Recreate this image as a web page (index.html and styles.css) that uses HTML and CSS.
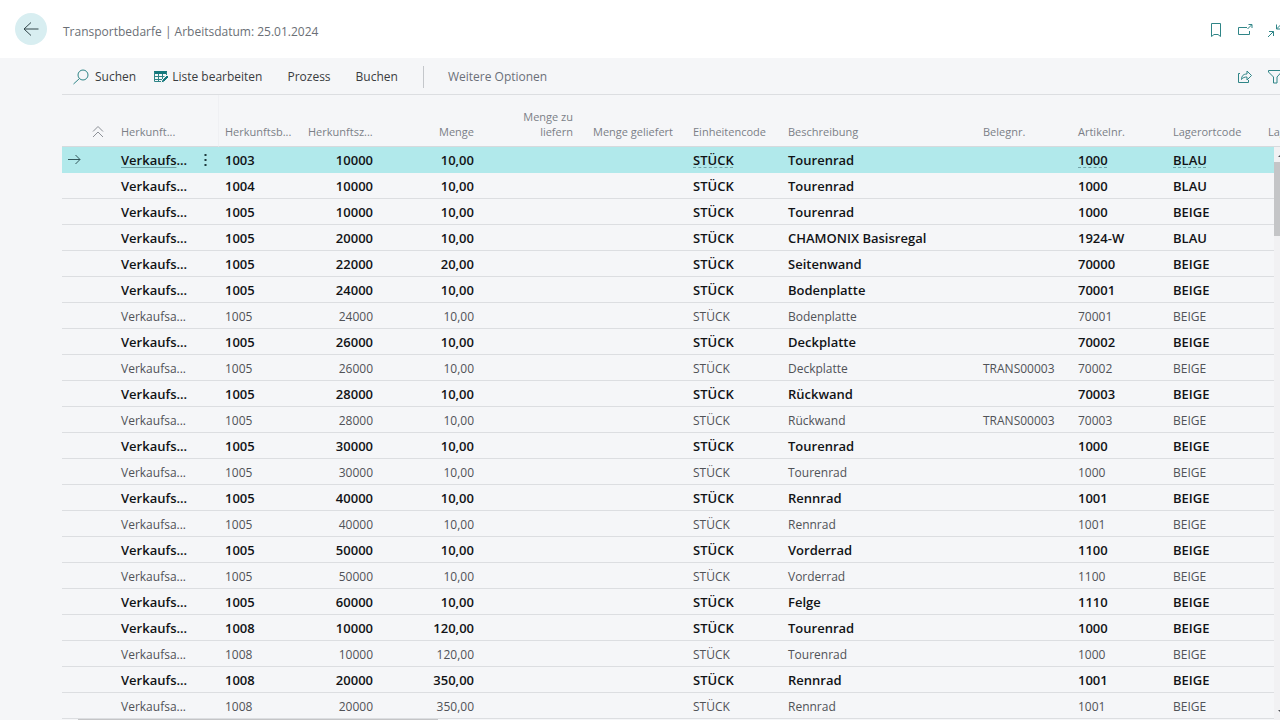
FILE: index.html
```html
<!DOCTYPE html>
<html lang="de">
<head>
<meta charset="utf-8">
<title>Transportbedarfe</title>
<link rel="stylesheet" href="styles.css">
</head>
<body>
<header class="topbar">
  <button class="back" type="button" aria-label="Zurück">
    <svg width="16" height="16" viewBox="0 0 16 16"><path d="M15.500 8H1M8 1.500L1 8l7 6.500"/></svg>
  </button>
  <h1 class="title">Transportbedarfe | Arbeitsdatum: 25.01.2024</h1>
  <div class="icons">
    <button type="button" aria-label="Lesezeichen"><svg width="16" height="16" viewBox="0 0 16 16"><path d="M4.500 1.500h9v13L11 12.500H7l-2.500 2z"/></svg></button>
    <button type="button" aria-label="In neuem Fenster öffnen"><svg width="16" height="16" viewBox="0 0 16 16"><path d="M10 5.500H1.500v7h11V9M10.500 7l4-4M11.500 2.500H15V6"/></svg></button>
    <button type="button" aria-label="Verkleinern"><svg width="16" height="16" viewBox="0 0 16 16"><path d="M1 15l5.500-5.500M2 9.500h4.500V14M15 1.500L9.500 7M9.500 2.500V7H14"/></svg></button>
  </div>
</header>
<main class="page">
  <nav class="toolbar">
    <button class="action search" type="button"><svg width="16" height="16" viewBox="0 0 16 16"><circle cx="10" cy="6" r="5"/><path d="M6.500 9.500L.5 15"/></svg>Suchen</button>
    <button class="action edit" type="button"><svg width="15" height="14" viewBox="0 0 15 14"><path class="solid" d="M0 1h13v3H0z"/><path d="M.5 2v9.500H7M12.500 2v3M4.500 4v8M8.500 4v5M.5 6.500h10M.5 9.500H8"/><path class="pen" d="M7 13l1-3 5-5 2 2-5 5z"/></svg>Liste bearbeiten</button>
    <button class="action" type="button">Prozess</button>
    <button class="action" type="button">Buchen</button>
    <button class="action more" type="button">Weitere Optionen</button>
    <div class="icons">
      <button type="button" aria-label="Teilen"><svg width="16" height="16" viewBox="0 0 16 16"><path d="M3 4.500H1.500v9h10V11M4.500 10.500c.3-4 2-5.500 5.500-5.500V2l4.500 4.500L10 11V8c-2.500 0-4 .5-5.500 2.500z"/></svg></button>
      <button type="button" aria-label="Filter"><svg width="16" height="16" viewBox="0 0 16 16"><path d="M1.500 1.500h13V3L10 8v6H6.500V8l-5-5z"/></svg></button>
    </div>
  </nav>
  <section class="list">
    <table class="grid">
      <colgroup><col class="w-mark"><col class="w-sort"><col class="w-source"><col class="w-doc"><col class="w-line"><col class="w-qty"><col class="w-todo"><col class="w-done"><col class="w-code"><col class="w-desc"><col class="w-code"><col class="w-code"><col class="w-code"><col></colgroup>
      <thead>
        <tr>
          <th></th>
          <th class="sort"><svg width="12" height="13" viewBox="0 0 12 13"><path d="M1 6.500L6 1.500l5 5M1 12l5-5 5 5"/></svg></th>
          <th class="split">Herkunft...</th><th>Herkunftsb...</th><th>Herkunftsz...</th>
          <th class="num">Menge</th><th class="num">Menge zu liefern</th><th class="num wide">Menge geliefert</th>
          <th>Einheitencode</th><th>Beschreibung</th><th>Belegnr.</th><th>Artikelnr.</th><th>Lagerortcode</th><th>Lag</th>
        </tr>
      </thead>
      <tbody id="rows"></tbody>
    </table>
    <div class="vscroll"><svg width="10" height="6" viewBox="0 0 10 6"><path d="M1 5l4-4 4 4z"/></svg><div class="thumb"></div><svg width="10" height="6" viewBox="0 0 10 6"><path d="M1 1l4 4 4-4z"/></svg></div>
    <div class="hscroll"></div>
  </section>
</main>
<script src="rows.js"></script>
</body>
</html>
```
FILE: rows.js
```js
// bold, document no., line no., quantity, description, transport no., item no., location
const rows = [
  [1, "1003", "10000", "10,00", "Tourenrad", "", "1000", "BLAU"],
  [1, "1004", "10000", "10,00", "Tourenrad", "", "1000", "BLAU"],
  [1, "1005", "10000", "10,00", "Tourenrad", "", "1000", "BEIGE"],
  [1, "1005", "20000", "10,00", "CHAMONIX Basisregal", "", "1924-W", "BLAU"],
  [1, "1005", "22000", "20,00", "Seitenwand", "", "70000", "BEIGE"],
  [1, "1005", "24000", "10,00", "Bodenplatte", "", "70001", "BEIGE"],
  [0, "1005", "24000", "10,00", "Bodenplatte", "", "70001", "BEIGE"],
  [1, "1005", "26000", "10,00", "Deckplatte", "", "70002", "BEIGE"],
  [0, "1005", "26000", "10,00", "Deckplatte", "TRANS00003", "70002", "BEIGE"],
  [1, "1005", "28000", "10,00", "Rückwand", "", "70003", "BEIGE"],
  [0, "1005", "28000", "10,00", "Rückwand", "TRANS00003", "70003", "BEIGE"],
  [1, "1005", "30000", "10,00", "Tourenrad", "", "1000", "BEIGE"],
  [0, "1005", "30000", "10,00", "Tourenrad", "", "1000", "BEIGE"],
  [1, "1005", "40000", "10,00", "Rennrad", "", "1001", "BEIGE"],
  [0, "1005", "40000", "10,00", "Rennrad", "", "1001", "BEIGE"],
  [1, "1005", "50000", "10,00", "Vorderrad", "", "1100", "BEIGE"],
  [0, "1005", "50000", "10,00", "Vorderrad", "", "1100", "BEIGE"],
  [1, "1005", "60000", "10,00", "Felge", "", "1110", "BEIGE"],
  [1, "1008", "10000", "120,00", "Tourenrad", "", "1000", "BEIGE"],
  [0, "1008", "10000", "120,00", "Tourenrad", "", "1000", "BEIGE"],
  [1, "1008", "20000", "350,00", "Rennrad", "", "1001", "BEIGE"],
  [0, "1008", "20000", "350,00", "Rennrad", "", "1001", "BEIGE"]
];

const arrow = '<svg class="arrow" width="13" height="11" viewBox="0 0 13 11"><path d="M0 5.500h12M7.500 1L12 5.500 7.500 10"/></svg>';
const menu = '<button class="menu" type="button" aria-label="Weitere Optionen anzeigen"><svg width="3" height="14" viewBox="0 0 3 14"><path d="M.5 1h2v2h-2zM.5 6h2v2h-2zM.5 11h2v2h-2z"/></svg></button>';

document.getElementById("rows").innerHTML = rows.map(([bold, doc, line, qty, desc, trans, item, loc], i) => {
  const current = i === 0;
  const link = (text) => current ? `<a class="link" href="#">${text}</a>` : text;
  const source = current
    ? `<div class="source"><span><a class="link first" href="#">Verkaufs</a>...</span>${menu}</div>`
    : bold ? "Verkaufs..." : "Verkaufsa...";
  return `<tr class="${bold ? "bold" : "plain"}${current ? " current" : ""}">
    <td class="mark">${current ? arrow : ""}</td><td></td><td>${source}</td><td>${doc}</td>
    <td class="num">${line}</td><td class="num">${qty}</td><td></td><td></td>
    <td>${link("STÜCK")}</td><td>${desc}</td><td>${trans}</td><td>${link(item)}</td><td>${link(loc)}</td><td></td></tr>`;
}).join("");
```
FILE: styles.css
```css
* { box-sizing: border-box; }
body {
  margin: 0;
  height: 100vh;
  overflow: hidden;
  display: flex;
  flex-direction: column;
  background: #f5f6f8;
  color: #505257;
  font-family: "Open Sans", "Noto Sans", sans-serif;
  font-size: 12px;
}
button {
  margin: 0;
  padding: 0;
  border: 0;
  background: none;
  color: inherit;
  font: inherit;
}
svg { display: block; flex: none; fill: none; stroke: #2f8587; stroke-width: 1; }

.topbar {
  flex: none;
  display: flex;
  align-items: center;
  height: 58px;
  padding-left: 15px;
  background: #fff;
}
.back {
  display: flex;
  align-items: center;
  justify-content: center;
  width: 32px;
  height: 32px;
  border-radius: 50%;
  background: #d8eef1;
}
.back svg { stroke: #33474b; }
.title {
  margin: 0;
  padding: 5px 0 0 16px;
  color: #6b6f76;
  font-size: 12px;
  font-weight: 400;
}
.icons {
  display: flex;
  gap: 14px;
  margin: 2px -3px 0 auto;
}

.page {
  flex: 1;
  min-height: 0;
  display: flex;
  flex-direction: column;
  padding-left: 62px;
}
.toolbar {
  flex: none;
  display: flex;
  align-items: center;
  height: 37px;
  padding: 2px 0 0 11px;
  border-bottom: 1px solid #dcdee1;
  color: #3a3c40;
  font-size: 12px;
}
.toolbar .icons { margin-top: 0; }
.action {
  display: flex;
  align-items: center;
  margin-right: 25px;
  line-height: 22px;
}
.search { gap: 6px; margin-right: 18px; }
.edit { gap: 3px; }
.edit .solid { fill: #14787c; stroke: none; }
.edit .pen { fill: #14787c; stroke: #f5f6f8; }
.more {
  padding-left: 24px;
  border-left: 1px solid #c4c7cb;
  color: #6b7078;
}

.list {
  position: relative;
  flex: 1;
  min-height: 0;
  overflow: hidden;
}
.grid {
  width: 100%;
  table-layout: fixed;
  border-collapse: separate;
  border-spacing: 0;
}
.w-mark { width: 24px; }
.w-sort { width: 29px; }
.w-source { width: 104px; }
.w-doc { width: 83px; }
.w-line { width: 77px; }
.w-qty { width: 101px; }
.w-todo { width: 99px; }
.w-done { width: 108px; }
.w-code { width: 95px; }
.w-desc { width: 195px; }

th, td { padding: 0 6px; text-align: left; white-space: nowrap; }
th {
  height: 52px;
  padding-bottom: 7px;
  border-bottom: 1px solid #d6dadd;
  vertical-align: bottom;
  color: #7b7f87;
  font-size: 11px;
  font-weight: 400;
  line-height: 15px;
}
th.num { white-space: normal; padding-left: 40px; }
th.wide { padding-left: 0; padding-right: 14px; white-space: nowrap; }
.num { text-align: right; }
.split { border-right: 1px solid #eff0f3; }
.sort svg { margin: 0 0 1px; stroke: #8c9097; }
td { height: 26px; padding-top: 2px; border-bottom: 1px solid #dcdee1; line-height: 18px; }
.bold { color: #111316; font-size: 13px; font-weight: 600; }
.bold td { padding-top: 0; }
.current td { background: #b1e9eb; border-color: #b1e9eb; }
.mark { padding-right: 0; }
.mark svg { stroke: #33575b; }
.link {
  color: inherit;
  text-decoration: underline dashed #74a5a9 1px;
  text-underline-offset: 2px;
}
.first { text-decoration-style: solid; }
.source { display: flex; align-items: center; justify-content: space-between; }
.menu { padding-right: 6px; }
.menu svg { fill: #1f3a3d; stroke: none; }

.vscroll {
  position: absolute;
  top: 52px;
  right: 0;
  bottom: 0;
  width: 6px;
  padding: 5px 0;
  overflow: hidden;
  display: flex;
  flex-direction: column;
  background: #f1f1f3;
}
.vscroll svg { margin-left: 3px; fill: #505257; stroke: none; }
.thumb { height: 74px; margin: 4px 0 auto; background: #c4c5c7; }
.hscroll {
  position: absolute;
  left: 16px;
  bottom: 0;
  width: 360px;
  height: 1px;
  background: #c4c5c7;
}
```
